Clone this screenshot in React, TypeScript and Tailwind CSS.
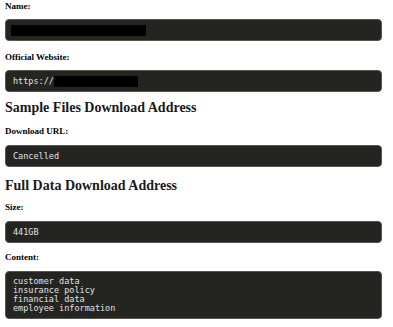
const serif = { fontFamily: '"Liberation Serif", serif' };

function Label({ text, className }: { text: string; className: string }) {
  return (
    <div
      className={`text-[9px] font-bold leading-[10px] text-black ${className}`}
      style={serif}
    >
      {text}
    </div>
  );
}

function Field({ children, className }: { children: React.ReactNode; className: string }) {
  return (
    <div
      className={`flex h-[22px] items-center rounded-[4px] border border-[#55554f] bg-[#242420] px-[7px] font-['DejaVu_Sans_Mono',monospace] text-[8.5px] text-[#e2e2e2] ${className}`}
    >
      {children}
    </div>
  );
}

function Heading({ text, className }: { text: string; className: string }) {
  return (
    <h2 className={`text-[14px] font-bold leading-[18px] text-[#1a1a1a] ${className}`} style={serif}>
      {text}
    </h2>
  );
}

export default function App() {
  return (
    <div className="h-[327px] w-[393px] bg-white pl-[5px] pr-[11px] pt-[1px]">
      <Label text="Name:" className="" />
      <Field className="mt-[8px]">
        <span className="ml-[-2px] mt-[1px] h-[11px] w-[135px] bg-black" />
      </Field>

      <Label text="Official Website:" className="mt-[11px]" />
      <Field className="mt-[8px]">
        <span>https://</span>
        <span className="h-[11px] w-[84px] bg-black" />
      </Field>

      <Heading text="Sample Files Download Address" className="mt-[7px]" />

      <Label text="Download URL:" className="mt-[9px]" />
      <Field className="mt-[9px]">Cancelled</Field>

      <Heading text="Full Data Download Address" className="mt-[10px]" />

      <Label text="Size:" className="mt-[7px]" />
      <Field className="mt-[9px]">441GB</Field>

      <Label text="Content:" className="mt-[9px]" />
      <div className="mt-[9px] h-[48px] rounded-[4px] border border-[#55554f] bg-[#242420] px-[7px] pt-[5px] font-['DejaVu_Sans_Mono',monospace] text-[8.5px] leading-[9px] text-[#e2e2e2]">
        <div>customer data</div>
        <div>insurance policy</div>
        <div>financial data</div>
        <div>employee information</div>
      </div>
    </div>
  );
}
